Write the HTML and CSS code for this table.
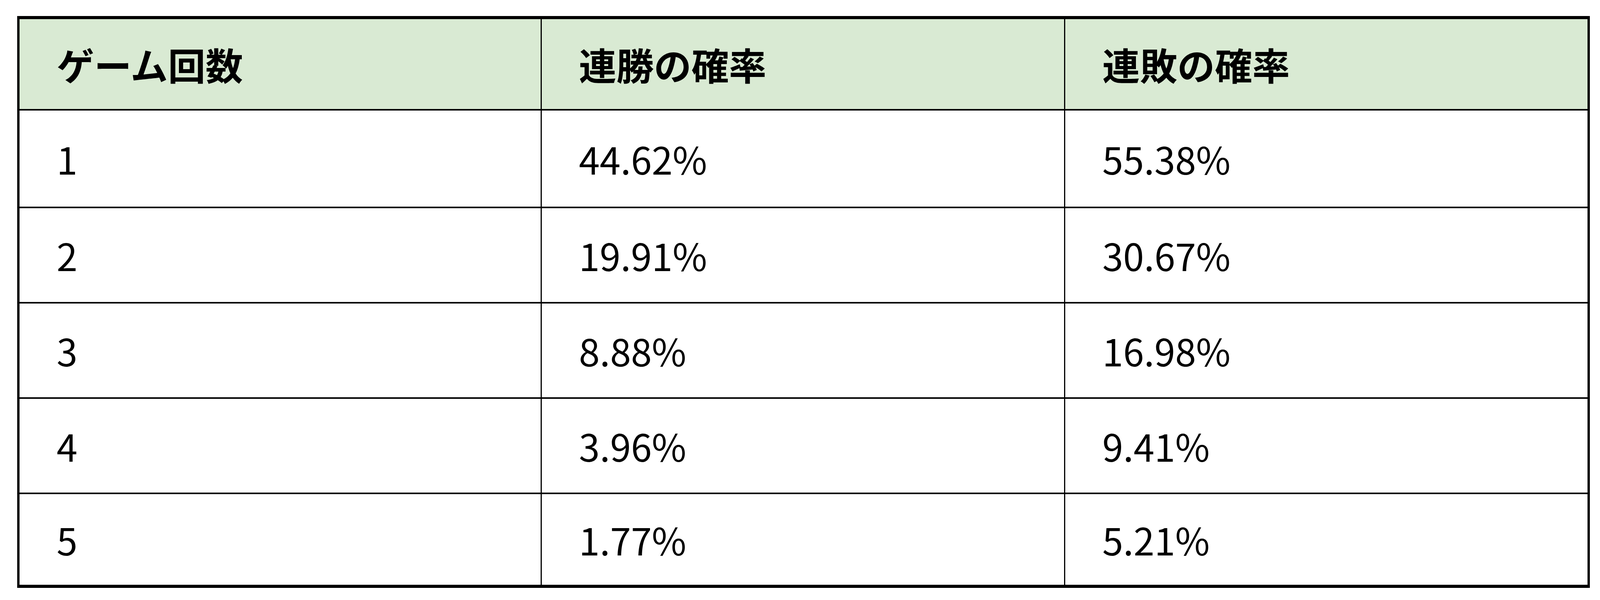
FILE: index.html
```html
<!DOCTYPE html>
<html lang="ja">
<head>
<meta charset="utf-8">
<title>連勝・連敗の確率</title>
<link rel="stylesheet" href="styles.css">
</head>
<body>
<div class="table">
  <div class="cell head">ゲーム回数</div>
  <div class="cell head">連勝の確率</div>
  <div class="cell head">連敗の確率</div>

  <div class="cell">1</div>
  <div class="cell">44.62%</div>
  <div class="cell">55.38%</div>

  <div class="cell">2</div>
  <div class="cell">19.91%</div>
  <div class="cell">30.67%</div>

  <div class="cell">3</div>
  <div class="cell">8.88%</div>
  <div class="cell">16.98%</div>

  <div class="cell">4</div>
  <div class="cell">3.96%</div>
  <div class="cell">9.41%</div>

  <div class="cell">5</div>
  <div class="cell">1.77%</div>
  <div class="cell">5.21%</div>
</div>
</body>
</html>
```

FILE: styles.css
```css
html, body {
  margin: 0;
  background: #ffffff;
}

body {
  padding: 41px 0 0 44px;
  font-family: "Noto Sans CJK JP", "Noto Sans", sans-serif;
  color: #000000;
}

.table {
  display: grid;
  width: max-content;
  grid-template-columns: 1334px 1337px 1337px;
  grid-template-rows: 230px 246px 240px 240px 240px 232px;
  column-gap: 3px;
  row-gap: 4px;
  padding: 8px 6px;
  background: #000000;
}

.cell {
  display: flex;
  align-items: center;
  padding-left: 95px;
  background: #ffffff;
  font-size: 96px;
  line-height: 1.5;
  font-weight: 400;
}

.cell.head {
  background: #d9ead3;
  font-weight: 700;
}
```
